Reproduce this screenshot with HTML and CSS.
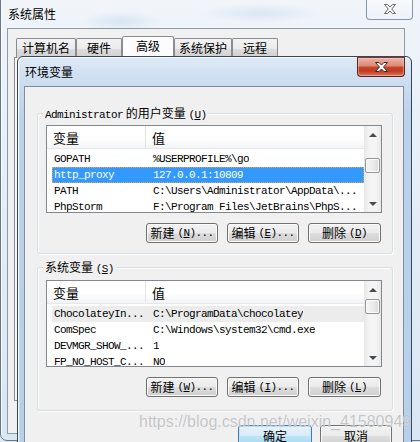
FILE: index.html
```html
<!DOCTYPE html>
<html lang="zh-CN">
<head>
<meta charset="utf-8">
<title>环境变量</title>
<link rel="stylesheet" href="styles.css">
</head>
<body>
<div class="win outer">
  <div class="outer-title">系统属性</div>
  <div class="close-ghost">
    <svg width="12" height="10" viewBox="0 0 12 10"><polygon points="0.5,0.5 3.5,0.5 6,3 8.5,0.5 11.5,0.5 7.8,5 11.5,9.5 8.5,9.5 6,7 3.5,9.5 0.5,9.5 4.2,5" fill="#f5f5f5" stroke="#6a6a6a" stroke-width="1"/></svg>
  </div>
  <div class="client">
    <div class="tabs">
      <div class="tab t1">计算机名</div>
      <div class="tab t2">硬件</div>
      <div class="tab t3 sel">高级</div>
      <div class="tab t4">系统保护</div>
      <div class="tab t5">远程</div>
    </div>
    <div class="tabpane"></div>
  </div>
</div>

<div class="win dlg">
  <div class="dlg-title">环境变量</div>
  <div class="close-red">
    <svg width="13" height="10" viewBox="0 0 13 10"><polygon points="0.5,0.5 4,0.5 6.5,3 9,0.5 12.5,0.5 8.5,5 12.5,9.5 9,9.5 6.5,7 4,9.5 0.5,9.5 4.5,5" fill="#ffffff" stroke="#4a2520" stroke-width="1"/></svg>
  </div>
  <div class="dlg-body">
    <div class="group g1">
      <div class="group-label"><span class="mono">Administrator</span> 的用户变量 <span class="mono">(<u>U</u>)</span></div>
      <div class="list l1">
        <div class="lv">
          <div class="lv-head"><div class="h1">变量</div><div class="h2">值</div></div>
          <div class="rows">
            <div class="row"><div class="c1">GOPATH</div><div class="c2">%USERPROFILE%\go</div></div>
            <div class="row selected"><div class="c1">http_proxy</div><div class="c2">127.0.0.1:10809</div></div>
            <div class="row"><div class="c1">PATH</div><div class="c2">C:\Users\Administrator\AppData\...</div></div>
            <div class="row"><div class="c1">PhpStorm</div><div class="c2">F:\Program Files\JetBrains\PhpS...</div></div>
          </div>
        </div>
        <div class="sb">
          <div class="sb-btn"><span class="arr up"></span></div>
          <div class="sb-track"><div class="thumb"></div></div>
          <div class="sb-btn"><span class="arr down"></span></div>
        </div>
      </div>
      <div class="btns">
        <div class="btn w1">新建 <span class="mono">(<u>N</u>)...</span></div>
        <div class="btn w2">编辑 <span class="mono">(<u>E</u>)...</span></div>
        <div class="btn w3">删除 <span class="mono">(<u>D</u>)</span></div>
      </div>
    </div>

    <div class="group g2">
      <div class="group-label">系统变量 <span class="mono">(<u>S</u>)</span></div>
      <div class="list l2">
        <div class="lv">
          <div class="lv-head"><div class="h1">变量</div><div class="h2">值</div></div>
          <div class="rows">
            <div class="row inactive"><div class="c1">ChocolateyIn...</div><div class="c2">C:\ProgramData\chocolatey</div></div>
            <div class="row"><div class="c1">ComSpec</div><div class="c2">C:\Windows\system32\cmd.exe</div></div>
            <div class="row"><div class="c1">DEVMGR_SHOW_...</div><div class="c2">1</div></div>
            <div class="row"><div class="c1">FP_NO_HOST_C...</div><div class="c2">NO</div></div>
          </div>
        </div>
        <div class="sb">
          <div class="sb-btn"><span class="arr up"></span></div>
          <div class="sb-track"><div class="thumb"></div></div>
          <div class="sb-btn"><span class="arr down"></span></div>
        </div>
      </div>
      <div class="btns">
        <div class="btn w1">新建 <span class="mono">(<u>W</u>)...</span></div>
        <div class="btn w2">编辑 <span class="mono">(<u>I</u>)...</span></div>
        <div class="btn w3">删除 <span class="mono">(<u>L</u>)</span></div>
      </div>
    </div>

    <div class="dlg-btns">
      <div class="btn ok">确定</div>
      <div class="btn cancel">取消</div>
    </div>
  </div>
</div>

<div class="watermark">https://blog.csdn.net/weixin_41580949</div>
</body>
</html>
```

FILE: styles.css
```css
* { box-sizing: border-box; }

html, body {
  margin: 0;
  padding: 0;
}

body {
  width: 420px;
  height: 442px;
  overflow: hidden;
  position: relative;
  background: linear-gradient(180deg, #e9eff6 0%, #dde7f2 100%);
  font-family: "Noto Sans CJK SC", "Noto Sans", sans-serif;
  font-size: 12px;
  color: #000;
}

.mono {
  font-family: "Liberation Mono", "DejaVu Sans Mono", monospace;
  font-size: 11px;
  letter-spacing: -0.6px;
}

u { text-decoration: underline; }

/* ---------- outer window (系统属性) ---------- */
.win { position: absolute; }

.outer {
  left: 0;
  top: -10px;
  width: 440px;
  height: 451px;
  border: 1px solid #66778a;
  border-radius: 7px;
  background:
    radial-gradient(ellipse 40px 10px at 120px 30px, rgba(170,200,230,0.35), transparent),
    radial-gradient(ellipse 60px 10px at 260px 22px, rgba(170,200,230,0.3), transparent),
    linear-gradient(180deg, #f1f5fa 0%, #e6eef7 40%, #d9e6f3 100%);
  box-shadow: inset 1px 1px 0 rgba(255,255,255,0.8);
}

.outer-title {
  height: 37px;
  padding: 16px 0 0 7px;
  line-height: 14px;
  color: #000;
}

.close-ghost {
  position: absolute;
  left: 365px;
  top: 8px;
  width: 47px;
  height: 21px;
  border: 1px solid #8796a6;
  border-top: none;
  border-radius: 0 0 4px 4px;
  background: linear-gradient(180deg, rgba(255,255,255,0.5), rgba(235,242,249,0.6));
  display: flex;
  align-items: center;
  justify-content: center;
}

.client {
  margin-left: 6px;
  width: 398px;
  height: 406px;
  border: 1px solid #8d9aa8;
  background: #f0f0f0;
}

.tabs {
  display: flex;
  align-items: flex-end;
  padding: 6px 0 0 8px;
  height: 28px;
}

.tab {
  height: 20px;
  border: 1px solid #898c95;
  border-bottom: none;
  border-radius: 2px 2px 0 0;
  background: linear-gradient(180deg, #f3f3f3 0%, #ebebeb 50%, #dddddd 51%, #d0d0d0 100%);
  line-height: 18px;
  text-align: center;
  margin-bottom: -1px;
}

.t1 { width: 60px; }
.t2 { width: 46px; }
.t3 { width: 52px; }
.t4 { width: 58px; }
.t5 { width: 46px; }

.tab.sel {
  height: 22px;
  background: #fcfcfc;
  line-height: 18px;
  position: relative;
}

.tabpane {
  margin: 0 0 0 6px;
  height: 344px;
  border: 1px solid #898c95;
  background: #f6f6f6;
}

/* ---------- inner dialog (环境变量) ---------- */
.dlg {
  left: 17px;
  top: 56px;
  width: 395px;
  height: 400px;
  border: 1px solid #37455a;
  border-radius: 6px 6px 0 0;
  background:
    linear-gradient(90deg, rgba(255,255,255,0.55) 0, rgba(255,255,255,0) 2px),
    linear-gradient(180deg, #dde9f6 0px, #cadcf0 28px, #bad2ec 60px, #b7d0ea 100%);
  box-shadow: inset 1px 1px 0 rgba(255,255,255,0.8);
}

.dlg-title {
  height: 29px;
  padding-left: 7px;
  line-height: 29px;
}

.close-red {
  position: absolute;
  left: 339px;
  top: 0;
  width: 48px;
  height: 20px;
  border: 1px solid #58261f;
  border-top-color: #7a3a30;
  border-radius: 0 0 4px 4px;
  background: linear-gradient(180deg, #eab2a4 0%, #de8c78 42%, #c8452d 52%, #c0391f 72%, #d77a60 100%);
  box-shadow: inset 0 0 0 1px rgba(255,210,200,0.45);
  display: flex;
  align-items: center;
  justify-content: center;
}

.dlg-body {
  margin: 0 7px 0 6px;
  height: 370px;
  border: 1px solid #7f8d9c;
  border-bottom: none;
  background: #f0f0f0;
  padding-top: 1px;
}

/* group boxes */
.group {
  margin: 0 10px 0 12px;
  border: 1px solid #d5dfe5;
  border-radius: 3px;
  box-shadow: inset 1px 1px 0 #ffffff, 1px 1px 0 #ffffff;
}

.g1 { margin-top: 25px; padding-bottom: 10px; }
.g2 { margin-top: 13px; padding-bottom: 13px; }

.group-label {
  display: block;
  width: max-content;
  margin: -8px 0 0 5px;
  padding: 0 2px;
  height: 14px;
  line-height: 14px;
  background: #f0f0f0;
  white-space: nowrap;
}

.list {
  margin: 5px 10px 0 8px;
  height: 88px;
  border: 1px solid #828790;
  background: #fff;
  display: flex;
  overflow: hidden;
}

.l2 { margin-top: 6px; height: 87px; }

.lv {
  flex: 1;
  overflow: hidden;
}

.lv-head {
  display: flex;
  height: 23px;
  background: linear-gradient(180deg, #ffffff 0%, #ffffff 55%, #f3f4f6 100%);
  border-bottom: 1px solid #e6e8eb;
}

.h1 {
  width: 99px;
  padding: 4px 0 0 6px;
  line-height: 16px;
  font-size: 13px;
  border-right: 1px solid #e2e3e5;
}

.h2 {
  padding: 4px 0 0 6px;
  line-height: 16px;
  font-size: 13px;
}

.rows {
  padding: 2px 0 0 5px;
}

.row {
  display: flex;
  height: 16px;
  align-items: center;
  font-family: "Liberation Mono", "DejaVu Sans Mono", monospace;
  font-size: 11px;
  letter-spacing: -0.6px;
  white-space: nowrap;
}

.c1 { width: 100px; padding-left: 2px; flex: none; }
.c2 { padding-left: 1px; overflow: hidden; }

.row.selected {
  background: #3399ff;
  color: #fff;
  outline: 1px dotted #e8a040;
  outline-offset: -1px;
}

.row.inactive { background: #ececec; }

/* scrollbar */
.sb {
  width: 17px;
  flex: none;
  display: flex;
  flex-direction: column;
  background: linear-gradient(90deg, #e6e6e6 0%, #f4f4f4 30%, #f4f4f4 70%, #e8e8e8 100%);
}

.sb-btn {
  height: 17px;
  display: flex;
  align-items: center;
  justify-content: center;
}

.arr {
  width: 0;
  height: 0;
  border-left: 4px solid transparent;
  border-right: 4px solid transparent;
}

.arr.up { border-bottom: 4px solid #4a4a4a; }
.arr.down { border-top: 4px solid #4a4a4a; }

.sb-track { flex: 1; }

.thumb {
  margin: 15px 1px 0 1px;
  height: 15px;
  border: 1px solid #979797;
  border-radius: 2px;
  background: linear-gradient(90deg, #f5f5f5 0%, #ececec 50%, #d9d9d9 100%);
  box-shadow: inset 0 0 0 1px #fbfbfb;
}

.l2 .thumb { margin-top: 1px; }

/* buttons */
.btns {
  display: flex;
  justify-content: flex-end;
  gap: 9px;
  margin: 10px 11px 0 0;
}

.btn {
  height: 20px;
  border: 1px solid #707070;
  border-radius: 3px;
  background: linear-gradient(180deg, #f2f2f2 0%, #ebebeb 48%, #dddddd 52%, #cfcfcf 100%);
  box-shadow: inset 0 0 0 1px #fbfbfb;
  display: flex;
  align-items: center;
  justify-content: center;
  line-height: 16px;
  white-space: nowrap;
}

.btn .mono { margin-left: 3px; }

.w1 { width: 72px; }
.w2 { width: 72px; }
.w3 { width: 73px; }

.dlg-btns {
  display: flex;
  justify-content: flex-end;
  gap: 8px;
  margin: 14px 11px 0 0;
}

.ok {
  width: 74px;
  height: 22px;
  border-color: #3c7fb1;
  background: linear-gradient(180deg, #e6f3fb 0%, #d8ecf8 48%, #bee3f6 52%, #a8d6f1 100%);
  box-shadow: inset 0 0 0 1px #c3e6fb;
}

.cancel {
  width: 72px;
  height: 22px;
}

/* watermark overlay */
.watermark {
  position: absolute;
  left: 139px;
  top: 414px;
  font-family: "Liberation Sans", Arial, sans-serif;
  font-size: 16px;
  line-height: 16px;
  color: rgba(175, 178, 182, 0.75);
  text-shadow: 0 0 1px rgba(255,255,255,0.9);
  white-space: nowrap;
  pointer-events: none;
}
```
